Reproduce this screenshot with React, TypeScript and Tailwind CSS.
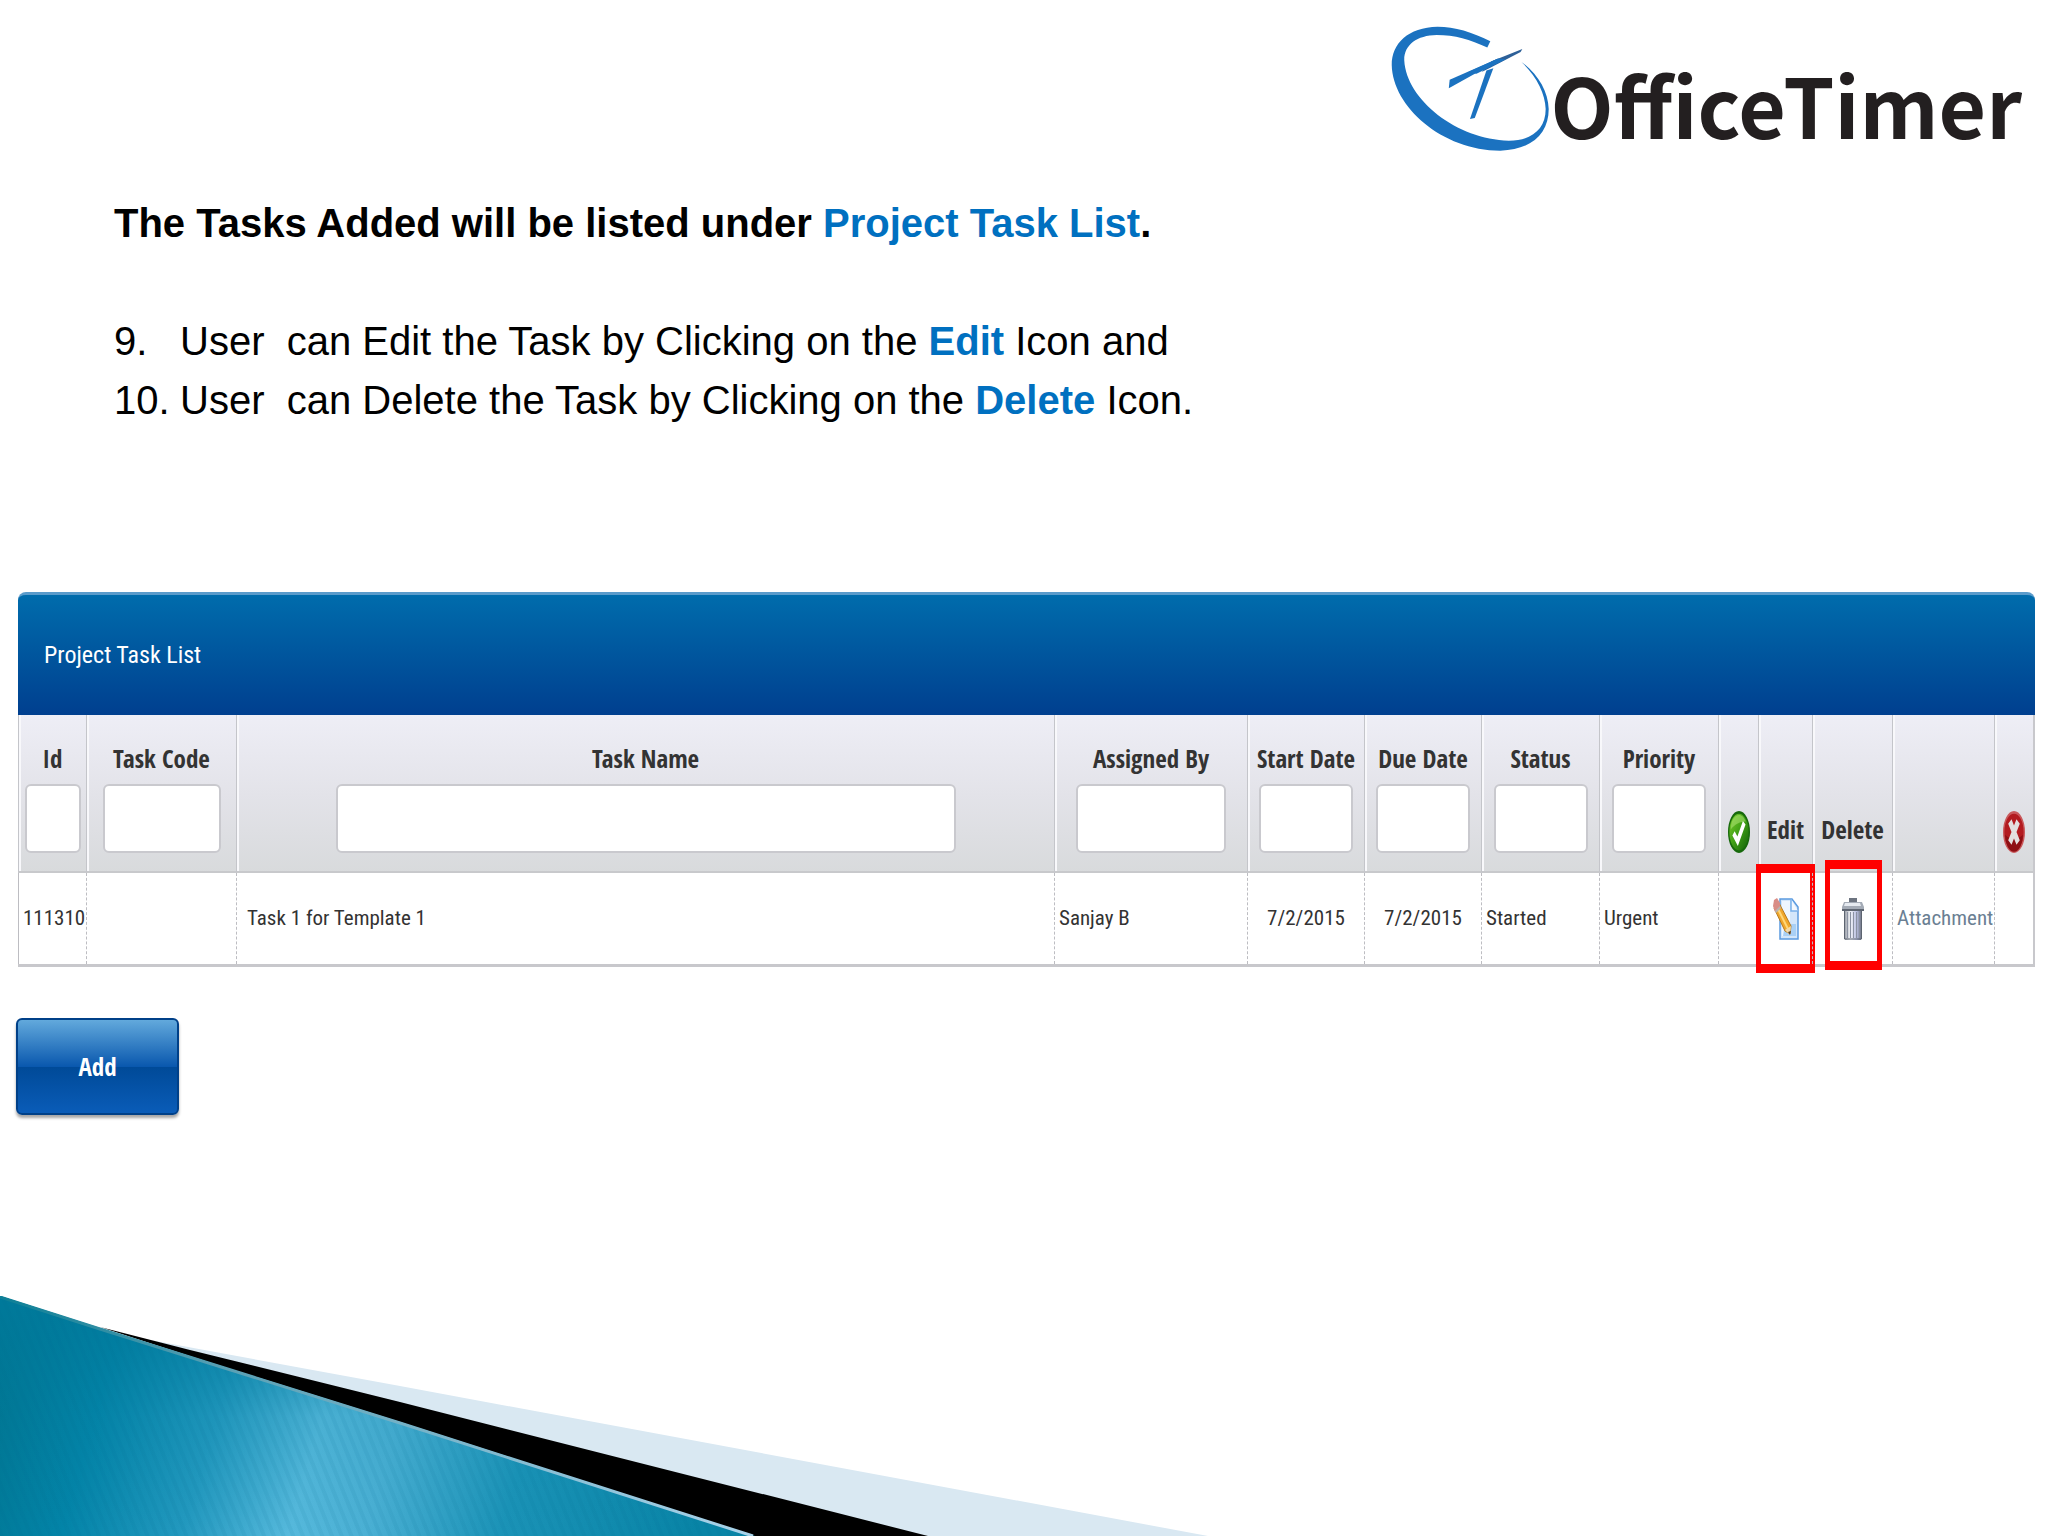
import type { ReactNode } from 'react'
import clsx from 'clsx'

const filters = [
  { label: 'Id', col: 'w-[68px]', input: 'w-14' },
  { label: 'Task Code', col: 'w-[150px]', input: 'w-[118px]' },
  { label: 'Task Name', col: '', input: 'w-[620px]' },
  { label: 'Assigned By', col: 'w-[193px]', input: 'w-[150px]' },
  { label: 'Start Date', col: 'w-[117px]', input: 'w-[94px]' },
  { label: 'Due Date', col: 'w-[117px]', input: 'w-[94px]' },
  { label: 'Status', col: 'w-[118px]', input: 'w-[94px]' },
  { label: 'Priority', col: 'w-[119px]', input: 'w-[94px]' },
]

const tasks = [
  {
    id: '111310',
    code: '',
    name: 'Task 1 for Template 1',
    assignedBy: 'Sanjay B',
    start: '7/2/2015',
    due: '7/2/2015',
    status: 'Started',
    priority: 'Urgent',
  },
]

function LogoMark() {
  return (
    <svg viewBox="50 75 370 385" preserveAspectRatio="none" className="w-40 h-32 shrink-0" fill="#1b72c0" aria-hidden="true">
      <path d="M282 124C240 96 200 80 160 80C92 82 54 130 54 195C56 320 170 452 305 453C380 450 417 400 417 328C416 275 392 222 354 186C388 228 409 280 410 328C410 388 378 423 325 423C205 420 88 300 83 182C82 135 112 106 158 105C200 105 235 118 275 143Z" />
      <path d="M186 265L188 240L300 176L290 190Z" />
      <path d="M285 184L356 147L352 156L283 203L262 216Z" fill="#2d6098" />
      <path d="M230 217L300 176L318 178L250 222Z" />
      <path d="M273 212L289 205L246 355L235 358Z" />
    </svg>
  )
}

function CheckIcon() {
  return (
    <svg viewBox="0 0 16 16" preserveAspectRatio="none" className="w-[22px] h-[42px]" aria-hidden="true">
      <defs>
        <linearGradient id="ok" x1="0" y1="0" x2="1" y2="1">
          <stop offset="0" stopColor="#7fd02c" />
          <stop offset="0.5" stopColor="#3f9f16" />
          <stop offset="1" stopColor="#0f5c08" />
        </linearGradient>
      </defs>
      <circle cx="8" cy="8" r="7.5" fill="url(#ok)" stroke="#17690c" />
      <path d="M2 7C2 3.500 5 1.500 8 1.500C10 1.500 12 2.500 13 4C9 4 5 5 2 7Z" fill="#b6e87d" opacity="0.5" />
      <path d="M4 8.500L7 11.500L11.800 4.500" fill="none" stroke="#fff" strokeWidth="2.300" />
    </svg>
  )
}

function CrossIcon() {
  return (
    <svg viewBox="0 0 16 16" preserveAspectRatio="none" className="w-[22px] h-[42px]" aria-hidden="true">
      <circle cx="8" cy="8" r="7.500" fill="#b31b20" stroke="#c9595c" />
      <path d="M1.500 9A6.500 6.500 0 0 0 14.500 9C11 11 5 11 1.500 9Z" fill="#8e0f14" />
      <path d="M5 4L11 12M11 4L5 12" fill="none" stroke="#e4e0e0" strokeWidth="3" />
    </svg>
  )
}

function EditIcon() {
  return (
    <svg viewBox="0 0 26 42" className="w-[26px] h-[42px]" aria-hidden="true">
      <path d="M7 1H19L25 9V41H7Z" fill="#d3e6fa" stroke="#5b9be0" strokeWidth="1.500" />
      <path d="M9 3H17V38H9Z" fill="#eef6ff" />
      <path d="M12 26H23V38H10Z" fill="#a9d0f5" />
      <path d="M18 1V13H25" fill="#f4f9ff" stroke="#78b0ea" strokeWidth="1.500" />
      <path d="M1 10L6 5L18 28L17 36L12 33Z" fill="#f0a72c" stroke="#b77a1e" />
      <path d="M5 11L15 31" stroke="#ffd77a" strokeWidth="2" />
      <path d="M1 2L4 0L7 5V9L2 14L0 8Z" fill="#d98d86" />
      <path d="M2 13L7 8L8 10L3 15Z" fill="#b9b3b0" />
      <path d="M12 32L18 28L17 37Z" fill="#f3d9a8" />
      <path d="M15 34L18 33L17 37Z" fill="#4b3a2a" />
    </svg>
  )
}

function TrashIcon() {
  return (
    <svg viewBox="0 0 22 42" className="w-[22px] h-[42px]" aria-hidden="true">
      <defs>
        <linearGradient id="bin" x1="0" x2="1">
          <stop offset="0" stopColor="#8d929c" />
          <stop offset="0.35" stopColor="#f2f4f8" />
          <stop offset="0.7" stopColor="#b9bfe0" />
          <stop offset="1" stopColor="#666c78" />
        </linearGradient>
      </defs>
      <path d="M7 0H15V4H7Z" fill="#6d7480" />
      <path d="M2 12H20L19 42H3Z" fill="url(#bin)" />
      <path d="M5.500 14V40M8.500 14V40M11.500 14V40M14.500 14V40M17.500 14V40" stroke="#8b92a2" />
      <path d="M2.500 12V41H19.500V12" fill="none" stroke="#5d6470" />
      <path d="M2 4H20L22 9V12H0V9Z" fill="#a4abb6" />
      <path d="M3 5H18L19 8H2Z" fill="#e6eaf0" />
      <path d="M0 11H22V13H0Z" fill="#5f6672" />
    </svg>
  )
}

function HeadCell({ children, className }: { children?: ReactNode; className?: string }) {
  return (
    <th
      className={clsx(
        'p-0 align-bottom whitespace-nowrap border-l border-b-2 border-l-[#c4c5ca] border-b-[#c8c9cc] shadow-[inset_2px_0_0_#f8f8fb]',
        className,
      )}
    >
      {children}
    </th>
  )
}

function Cell({ children, className }: { children?: ReactNode; className?: string }) {
  return (
    <td className={clsx('p-0 whitespace-nowrap border-l border-dashed border-[#bdbdc2] first:border-solid', className)}>
      {children}
    </td>
  )
}

function Wave() {
  return (
    <svg viewBox="0 0 1210 240" className="block w-[1210px] h-60 mt-auto" aria-hidden="true">
      <defs>
        <linearGradient id="sea" gradientUnits="userSpaceOnUse" x1="0" y1="30" x2="700" y2="230">
          <stop offset="0" stopColor="#00748f" />
          <stop offset="0.16" stopColor="#0384a8" />
          <stop offset="0.32" stopColor="#2399bf" />
          <stop offset="0.46" stopColor="#56b9dc" />
          <stop offset="0.56" stopColor="#4bb0d4" />
          <stop offset="0.74" stopColor="#1b93b7" />
          <stop offset="1" stopColor="#0884a6" />
        </linearGradient>
        <linearGradient id="shade" x1="0" y1="0" x2="0" y2="1">
          <stop offset="0" stopColor="#007a9c" stopOpacity="0.9" />
          <stop offset="0.5" stopColor="#007a9c" stopOpacity="0.15" />
          <stop offset="1" stopColor="#007a9c" stopOpacity="0" />
        </linearGradient>
        <linearGradient id="rim" x1="0" x2="1">
          <stop offset="0" stopColor="#0d7f96" />
          <stop offset="0.3" stopColor="#5aa0b4" />
          <stop offset="1" stopColor="#a9d3ea" />
        </linearGradient>
        <pattern id="lines" width="9" height="9" patternUnits="userSpaceOnUse" patternTransform="rotate(-22)">
          <path d="M0 0H4V9H0Z" fill="#00688c" opacity="0.08" />
        </pattern>
      </defs>
      <path d="M150 44L400 90L1208 240H900L400 110Z" fill="#d9e8f2" />
      <path d="M100 31L190 54L400 106L928 240H740L400 128Z" fill="#000" />
      <path d="M0 0L100 32L400 126L755 240H0Z" fill="url(#sea)" />
      <path d="M0 0L100 32L400 126L755 240H0Z" fill="url(#shade)" />
      <path d="M0 0L100 32L400 126L755 240H0Z" fill="url(#lines)" />
      <path d="M0 1L100 33L400 127L753 240" fill="none" stroke="url(#rim)" strokeWidth="3" />
    </svg>
  )
}

export default function App() {
  return (
    <div className="min-h-screen flex flex-col bg-white font-['Liberation_Sans',sans-serif] text-black overflow-hidden">
      <header className="flex justify-end pt-[25px] pr-[26px]">
        <LogoMark />
        <span className="font-['Noto_Sans_CJK_SC',sans-serif] font-bold text-[82px] leading-[158px] h-32 text-[#231f20]">
          OfficeTimer
        </span>
      </header>

      <section className="mt-[41px] pl-[114px] text-[40px] leading-[59px]">
        <h1 className="font-bold">
          The Tasks Added will be listed under <span className="text-[#0070c0]">Project Task List</span>.
        </h1>
        <ol className="mt-[59px]">
          <li className="flex whitespace-pre">
            <span className="w-[66px]">9.</span>
            <span>
              {'User  can Edit the Task by Clicking on the '}
              <b className="text-[#0070c0]">Edit</b> Icon and
            </span>
          </li>
          <li className="flex whitespace-pre">
            <span className="w-[66px]">10.</span>
            <span>
              {'User  can Delete the Task by Clicking on the '}
              <b className="text-[#0070c0]">Delete</b> Icon.
            </span>
          </li>
        </ol>
      </section>

      <main className="mt-[162px] pl-[18px] pr-[13px] font-['Roboto_Condensed','Roboto',sans-serif]">
        <h2 className="h-[123px] pl-[26px] flex items-center rounded-t-lg border-t-3 border-[#5a9bcb] bg-linear-to-b from-[#006cac] to-[#003f8f] text-white text-2xl">
          Project Task List
        </h2>
        <table className="w-full table-fixed border-separate border-spacing-0 border-r-2 border-b-3 border-[#c8c8cc] text-[21px] text-[#333]">
          <thead className="bg-linear-to-b from-[#eeeef6] via-[#e3e3e9] to-[#d8dadc] font-['Open_Sans_Condensed','Roboto_Condensed',sans-serif] text-[25px] leading-8">
            <tr className="h-[158px]">
              {filters.map((f) => (
                <HeadCell key={f.label} className={clsx(f.col, 'pb-[18px]')}>
                  <label className="flex flex-col items-center gap-[10px]">
                    {f.label}
                    <input
                      type="text"
                      className={clsx('h-[69px] bg-white border-2 border-[#c9c9ce] rounded-md px-2 font-normal', f.input)}
                    />
                  </label>
                </HeadCell>
              ))}
              <HeadCell className="w-10 pb-[18px]">
                <span className="flex justify-center">
                  <CheckIcon />
                </span>
              </HeadCell>
              <HeadCell className="w-[54px] pb-[26px]">Edit</HeadCell>
              <HeadCell className="w-20 pb-[26px]">Delete</HeadCell>
              <HeadCell className="w-[102px]" />
              <HeadCell className="w-[39px] pb-[18px]">
                <span className="flex justify-center">
                  <CrossIcon />
                </span>
              </HeadCell>
            </tr>
          </thead>
          <tbody>
            {tasks.map((t) => (
              <tr key={t.id} className="h-[91px]">
                <Cell className="pl-1">{t.id}</Cell>
                <Cell>{t.code}</Cell>
                <Cell className="pl-[10px]">{t.name}</Cell>
                <Cell className="pl-1">{t.assignedBy}</Cell>
                <Cell className="text-center">{t.start}</Cell>
                <Cell className="text-center">{t.due}</Cell>
                <Cell className="pl-1">{t.status}</Cell>
                <Cell className="pl-1">{t.priority}</Cell>
                <Cell />
                <Cell className="relative">
                  <button type="button" aria-label="Edit" className="flex w-full justify-center">
                    <EditIcon />
                  </button>
                  <span className="absolute -left-[3px] -right-[3px] -top-[9px] -bottom-[9px] border-x-5 border-y-9 border-[#f00] pointer-events-none" />
                </Cell>
                <Cell className="relative">
                  <button type="button" aria-label="Delete" className="flex w-full justify-center">
                    <TrashIcon />
                  </button>
                  <span className="absolute left-3 right-[10px] -top-[13px] -bottom-[6px] border-x-5 border-y-9 border-[#f00] pointer-events-none" />
                </Cell>
                <Cell className="pl-1">
                  <a href="#attachment" className="text-[#6b7f93]">
                    Attachment
                  </a>
                </Cell>
                <Cell />
              </tr>
            ))}
          </tbody>
        </table>
      </main>

      <div className="mt-[51px] pl-4">
        <button
          type="button"
          className="w-[163px] h-[97px] rounded-md border-2 border-[#004088] bg-[linear-gradient(#62a9dc,#0a58ae_50%,#004a98_51%,#0a5cb8)] shadow-[0_3px_3px_rgba(0,0,0,0.35)] font-['Open_Sans_Condensed','Roboto_Condensed',sans-serif] font-bold text-[25px] text-white"
        >
          Add
        </button>
      </div>

      <Wave />
    </div>
  )
}
